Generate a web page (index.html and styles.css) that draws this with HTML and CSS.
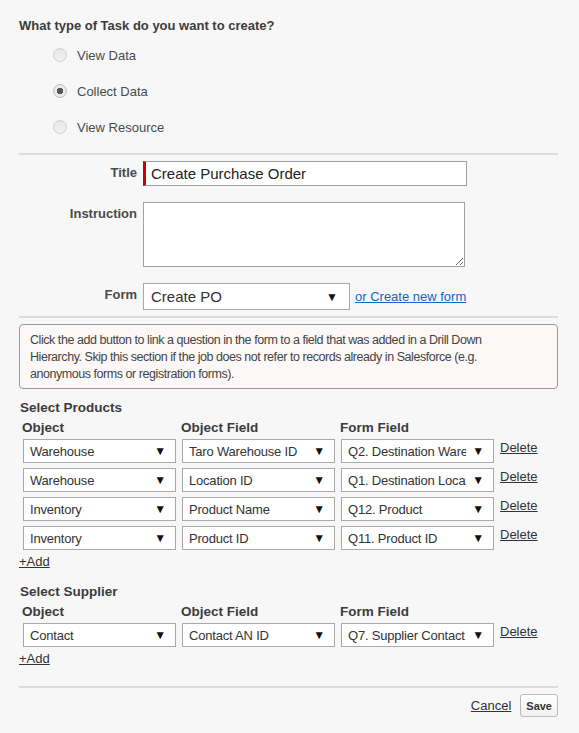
FILE: index.html
```html
<!DOCTYPE html>
<html>
    <head>
        <meta charset="utf-8">
        <title>New Task</title>
        <link rel="stylesheet" href="styles.css">
    </head>
    <body>
        <main class="task-form">
            <h2 class="question">What type of Task do you want to create?</h2>
            <div class="radio-list">
                <label class="radio-row"><input type="radio" name="type" class="radio"> View Data</label>
                <label class="radio-row"><input type="radio" name="type" class="radio" checked> Collect Data</label>
                <label class="radio-row"><input type="radio" name="type" class="radio"> View Resource</label>
            </div>
            <hr class="rule">

            <div class="fields">
                <label class="field-label">Title</label>
                <div><input class="text-input required" type="text" value="Create Purchase Order"></div>

                <label class="field-label">Instruction</label>
                <div><textarea class="text-area"></textarea></div>

                <label class="field-label">Form</label>
                <div class="form-pick">
                    <div class="select big"><span class="value">Create PO</span></div>
                    <a href="#" class="link">or Create new form</a>
                </div>
            </div>
            <hr class="rule second">

            <div class="info">
                Click the add button to link a question in the form to a field that was added in a Drill Down Hierarchy. Skip this section if the job does not refer to records already in Salesforce (e.g. anonymous forms or registration forms).
            </div>

            <h3 class="section-title">Select Products</h3>
            <div class="map-grid">
                <div class="col-head">Object</div>
                <div class="col-head">Object Field</div>
                <div class="col-head">Form Field</div>
                <div></div>

                <div class="select"><span class="value">Warehouse</span></div>
                <div class="select"><span class="value">Taro Warehouse ID</span></div>
                <div class="select"><span class="value">Q2. Destination Warehouse</span></div>
                <a href="#" class="delete">Delete</a>

                <div class="select"><span class="value">Warehouse</span></div>
                <div class="select"><span class="value">Location ID</span></div>
                <div class="select"><span class="value">Q1. Destination Location</span></div>
                <a href="#" class="delete">Delete</a>

                <div class="select"><span class="value">Inventory</span></div>
                <div class="select"><span class="value">Product Name</span></div>
                <div class="select"><span class="value">Q12. Product</span></div>
                <a href="#" class="delete">Delete</a>

                <div class="select"><span class="value">Inventory</span></div>
                <div class="select"><span class="value">Product ID</span></div>
                <div class="select"><span class="value">Q11. Product ID</span></div>
                <a href="#" class="delete">Delete</a>
            </div>
            <a href="#" class="add">+Add</a>

            <h3 class="section-title supplier">Select Supplier</h3>
            <div class="map-grid">
                <div class="col-head">Object</div>
                <div class="col-head">Object Field</div>
                <div class="col-head">Form Field</div>
                <div></div>

                <div class="select"><span class="value">Contact</span></div>
                <div class="select"><span class="value">Contact AN ID</span></div>
                <div class="select"><span class="value">Q7. Supplier Contact ID</span></div>
                <a href="#" class="delete">Delete</a>
            </div>
            <a href="#" class="add">+Add</a>

            <hr class="rule bottom">
            <div class="actions">
                <a href="#" class="cancel">Cancel </a>
                <button class="save">Save</button>
            </div>
        </main>
    </body>
</html>
```

FILE: styles.css
```css
body{
    margin: 0;
    background-color: #f7f7f7;
    font-family: "Liberation Sans", Arial, sans-serif;
    color: #333;
}
.task-form{
    padding: 18px 21px 0 19px;
}
.question{
    margin: 0;
    font-size: 13px;
    line-height: 15px;
    font-weight: bold;
    color: #3c3c3c;
}
.radio-list{
    display: flex;
    flex-direction: column;
    padding: 4px 0 0 33px;
}
.radio-row{
    display: flex;
    align-items: center;
    height: 36px;
    font-size: 13px;
    color: #4a4a4a;
}
.radio{
    appearance: none;
    width: 14px;
    height: 14px;
    margin: 0 10px 0 1px;
    border: 1px solid #d0d0d0;
    border-radius: 50%;
    background: linear-gradient(#e6e6e6, #f2f2f2);
}
.radio:checked{
    background: radial-gradient(circle, #555 0 3px, #e9e9e9 3.5px);
    border-color: #bdbdbd;
}
.rule{
    border: none;
    height: 2px;
    background-color: #dcdcdc;
    margin: 8px 0 6px 0;
}
.rule.second{
    margin: 6px 0 6px 0;
}

/* title / instruction / form */
.fields{
    display: grid;
    grid-template-columns: 118px auto;
    column-gap: 6px;
    row-gap: 16px;
}
.field-label{
    text-align: right;
    font-size: 13px;
    font-weight: bold;
    color: #4a4a4a;
    padding-top: 4px;
}
.text-input{
    box-sizing: border-box;
    display: block;
    width: 324px;
    height: 25px;
    margin: 0;
    border: 1px solid #a0a0a0;
    padding: 0 5px;
    font-family: "Liberation Sans", Arial, sans-serif;
    font-size: 15px;
    color: #222;
    background: white;
}
.required{
    border-left: 3px solid #c00;
}
.text-area{
    box-sizing: border-box;
    display: block;
    width: 322px;
    height: 65px;
    margin: 0;
    border: 1px solid #a0a0a0;
    background: white;
}
.form-pick{
    display: flex;
    align-items: center;
    gap: 5px;
}
.link{
    font-size: 13px;
    color: #1565c0;
}

/* dropdown boxes */
.select{
    box-sizing: border-box;
    display: flex;
    align-items: center;
    width: 153px;
    height: 24px;
    border: 1px solid #a9a9a9;
    background: white;
    padding: 0 9px 0 6px;
    font-size: 13px;
    letter-spacing: -0.2px;
    color: #333;
}
.select .value{
    flex: 1;
    overflow: hidden;
    white-space: nowrap;
    margin-right: 6px;
}
.select::after{
    content: "▼";
    font-size: 12px;
    color: #111;
}
.select.big{
    width: 207px;
    height: 27px;
    font-size: 15px;
    letter-spacing: 0;
    padding: 0 11px 0 7px;
}

.info{
    border: 1px solid #9a9a9a;
    border-radius: 4px;
    background-color: #fcf8f7;
    padding: 7px 40px 5px 10px;
    font-size: 12.5px;
    letter-spacing: -0.45px;
    line-height: 17px;
    color: #444;
}
.section-title{
    margin: 11px 0 0 1px;
    font-size: 13.5px;
    line-height: 16px;
    font-weight: bold;
    color: #3c3c3c;
}
.section-title.supplier{
    margin-top: 14px;
}
.map-grid{
    display: grid;
    grid-template-columns: 153px 153px 153px auto;
    column-gap: 6px;
    row-gap: 5px;
    padding-left: 4px;
}
.col-head{
    font-size: 13.5px;
    font-weight: bold;
    color: #3c3c3c;
    margin-left: -1px;
    line-height: 18px;
    margin-top: 3px;
    margin-bottom: -3px;
}
.delete{
    font-size: 13px;
    color: #333;
    margin-top: 1px;
}
.add{
    display: inline-block;
    font-size: 13px;
    color: #333;
    margin-top: 4px;
}
.rule.bottom{
    margin: 19px 0 0 0;
}
.actions{
    display: flex;
    justify-content: flex-end;
    align-items: center;
    gap: 9px;
    padding: 6px 0 0 0;
}
.cancel{
    font-size: 13px;
    color: #333;
}
.save{
    box-sizing: border-box;
    height: 23px;
    padding: 0 5px;
    border: 1px solid #bbb;
    border-radius: 3px;
    background: linear-gradient(#fff, #f1f1f1);
    font-family: "Liberation Sans", Arial, sans-serif;
    font-size: 11px;
    font-weight: bold;
    color: #333;
}
```
